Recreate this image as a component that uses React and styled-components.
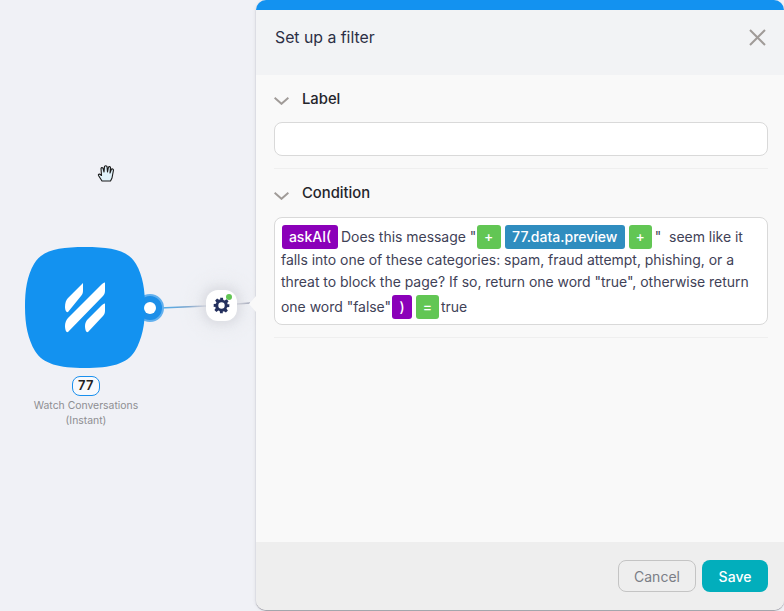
import React from "react";
import styled, { createGlobalStyle } from "styled-components";

const Global = createGlobalStyle`
  html, body { margin: 0; padding: 0; height: 100%; background: #f0f1f6; overflow: hidden; }
  #root { height: 100%; }
  * { box-sizing: border-box; }
`;
const Page = styled.div`
  width: 784px; height: 611px; display: flex; font-family: Inter, "Liberation Sans", sans-serif;
  background: #f0f1f6; overflow: hidden;
`;
const Canvas = styled.div`position: relative; width: 256px; flex: none;`;
const Links = styled.svg`position: absolute; left: 0; top: 0;`;
const Cursor = styled.svg`position: absolute; left: 97px; top: 164px;`;
const Blob = styled.svg`position: absolute; left: 25px; top: 247px;`;
const PortRing = styled.div`
  position: absolute; left: 136px; top: 294px; width: 28px; height: 28px; border-radius: 50%;
  background: #1d8fe8; border: 2px solid #62b0ee;
`;
const PortDot = styled.div`
  position: absolute; left: 144px; top: 302px; width: 12px; height: 12px; border-radius: 50%; background: #fff;
`;
const NodeMeta = styled.div`
  position: absolute; left: 26px; top: 376px; width: 120px; display: flex; flex-direction: column;
  align-items: center;
`;
const Badge = styled.div`
  width: 28px; height: 20px; border: 1.5px solid #1a90ee; border-radius: 8px; background: #f8f9fc;
  font-size: 13px; font-weight: 600; line-height: 17px; text-align: center; color: #222; letter-spacing: .5px;
`;
const NodeName = styled.div`
  margin-top: 2px; font-size: 10.4px; line-height: 15px; color: #8e8e92; text-align: center; white-space: nowrap;
`;
const FilterNode = styled.div`
  position: absolute; left: 206px; top: 290px; width: 31px; height: 31px; border-radius: 12px;
  background: #fff; display: flex; align-items: center; justify-content: center;
  box-shadow: 0 0 7px 4px rgba(214,215,221,.65), 0 0 12px 13px rgba(232,233,238,.55);
`;
const Dot = styled.span`
  position: absolute; right: 5px; top: 4px; width: 6px; height: 6px; border-radius: 50%; background: #62c654;
`;
const Panel = styled.div`
  position: relative; flex: 1; height: 610px; display: flex; flex-direction: column; overflow: visible;
  border-radius: 12px 12px 10px 10px; box-shadow: -1px 0 3px rgba(170,170,180,.25), 0 1px 1px rgba(90,90,100,.55);
  background: #f9f9f9;
  &::before {
    content: ""; position: absolute; left: -7px; top: 296px; width: 0; height: 0;
    border-top: 8.5px solid transparent; border-bottom: 8.5px solid transparent; border-right: 7px solid #f9f9f9;
  }
`;
const TopBar = styled.div`height: 10px; flex: none; background: #1392f0; border-radius: 12px 12px 0 0;`;
const Header = styled.div`
  height: 65px; flex: none; background: #f2f3f5; display: flex; align-items: flex-start;
  justify-content: space-between; padding: 18px 18px 0 19px;
`;
const Title = styled.div`font-size: 15.8px; line-height: 20px; color: #2c2f45;`;
const Body = styled.div`flex: 1; padding: 0 16px 0 18px;`;
const Section = styled.div`
  border-bottom: 1px solid #efefef; padding-bottom: ${p => p.$pb}px;
`;
const SectionHead = styled.div`
  height: ${p => p.$h}px; display: flex; align-items: center; gap: 13px;
`;
const SectionLabel = styled.div`font-size: 14.8px; font-weight: 500; color: #25252b; line-height: 20px;`;
const Field = styled.div`
  width: 494px; height: 34px; background: #fff; border: 1px solid #d9d9d9; border-radius: 8px;
`;
const Editor = styled.div`
  width: 494px; height: 108px; background: #fff; border: 1px solid #d9d9d9; border-radius: 8px;
  padding: 7px 6px 0 6px; font-size: 14px; line-height: 22px; color: #3f4257; letter-spacing: -0.03px;
`;
const Pill = styled.span`
  display: inline-block; height: 24px; line-height: 24px; padding: 0 ${p => p.$px ?? 6}px;
  margin: ${p => p.$mt ?? 0}px ${p => p.$mr ?? 4}px 0 ${p => p.$ml ?? 0}px;
  border-radius: 3px; color: #fff; font-weight: 500; font-size: 14px; letter-spacing: 0;
  background: ${p => p.$bg}; vertical-align: baseline; min-width: ${p => p.$min ?? 0}px; text-align: center;
`;
const FirstLine = styled.span`margin-left: 1px;`;
const Footer = styled.div`
  height: 68px; flex: none; background: #eeeeee; display: flex; align-items: flex-start; justify-content: flex-end;
  gap: 6px; padding: 18px 16px 0 0; border-radius: 0 0 10px 10px;
`;
const Button = styled.button`
  height: 32px; border-radius: 8px; font: ${p => p.$primary ? 500 : 400} 14px Inter, "Liberation Sans", sans-serif;
  width: ${p => p.$primary ? 66 : 78}px; padding: 0;
  background: ${p => p.$primary ? "#02aebc" : "transparent"};
  color: ${p => p.$primary ? "#fff" : "#7b7e86"};
  border: ${p => p.$primary ? "none" : "1px solid #c4c4c4"};
`;

const Chevron = () => (
  <svg width="15" height="8" viewBox="0 0 15 8" fill="none" style={{ marginTop: 5 }}>
    <path d="M.6.8 7.5 6.8 14.4.8" stroke="#a09b98" strokeWidth="2" />
  </svg>
);
const PLUS = "#62c654", PURPLE = "#8b00b9", BLUE = "#2f8dbf";

export default function App() {
  return (
    <Page>
      <Global />
      <Canvas>
        <Links width="256" height="611">
          <defs>
            <linearGradient id="lnk" gradientUnits="userSpaceOnUse" x1="160" y1="308" x2="206" y2="306">
              <stop offset="0" stopColor="#4fb0ee" />
              <stop offset="1" stopColor="#8f9ab8" />
            </linearGradient>
          </defs>
          <path d="M160 308 L206 306" stroke="url(#lnk)" strokeWidth="1.5" fill="none" />
          <path d="M237 304 L250 303" stroke="#8f93a8" strokeWidth="1.5" fill="none" />
        </Links>
        <Cursor width="20" height="20" viewBox="0 0 20 20">
          <path d="M5 17 L1.5 11.5 Q1 10 2.5 10 L4.5 11.5 L4 4.5 Q4.5 3 6 4 L7 8 L7.5 2.5 Q8.5 1 10 2.5 L10.5 8 L11.5 3 Q13 2 13.5 3.5 L13 9 L14.5 5 Q16 4.5 16.5 6 L15 14 L13.5 17 Z" fill="#e0f2fb" stroke="#1a1a1a" strokeWidth="1.1" strokeLinejoin="round" />
        </Cursor>
        <PortRing />
        <Blob width="120" height="121" viewBox="0 0 120 121">
          <path d="M60 0C86 0 103 3 111 17C118 29 120 43 120 60C120 78 117 92 110 104C102 117 86 121 60 121C34 121 18 117 10 104C3 92 0 78 0 60C0 43 2 29 9 17C17 3 34 0 60 0Z" fill="#1392f0" />
          <path d="M58 36V44C58 46 57 48 56 49L43 65C41 66 40 62 40 60C40 56 41 53 43 51Z" fill="#fff" />
          <path d="M80 36V44C80 46 79 48 78 49L43 85C41 86 40 82 40 79C40 76 41 73 43 71L76 38C78 36 80 35 80 36Z" fill="#fff" />
          <path d="M80 57V64C80 66 79 68 78 69L63 85C61 86 60 82 60 79C60 76 61 74 63 72L76 59C78 57 80 56 80 57Z" fill="#fff" />
        </Blob>
        <PortDot />
        <NodeMeta>
          <Badge>77</Badge>
          <NodeName>Watch Conversations<br />(Instant)</NodeName>
        </NodeMeta>
        <FilterNode>
          <svg width="17" height="17" viewBox="0 0 24 24">
            <path fillRule="evenodd" fill="#24305e" d="M10 1h4l.6 3.2 1.9.8 2.7-1.9 2.8 2.8-1.9 2.7.8 1.9L23 10v4l-3.1.6-.8 1.9 1.9 2.7-2.8 2.8-2.7-1.9-1.9.8L14 23h-4l-.6-3.1-1.9-.8-2.7 1.9-2.8-2.8 1.9-2.7-.8-1.9L1 14v-4l3.1-.5.8-1.9L3 4.9 5.8 2.1l2.7 1.9 1.9-.8L10 1Zm2 6.5a4.5 4.5 0 1 0 0 9 4.5 4.5 0 0 0 0-9Z" />
          </svg>
          <Dot />
        </FilterNode>
      </Canvas>
      <Panel>
        <TopBar />
        <Header>
          <Title>Set up a filter</Title>
          <svg width="17" height="17" viewBox="0 0 17 17" style={{ marginTop: 1 }}>
            <path d="M1 1 16 16M16 1 1 16" stroke="#a09b98" strokeWidth="2" fill="none" />
          </svg>
        </Header>
        <Body>
          <Section $pb={12}>
            <SectionHead $h={47}>
              <Chevron />
              <SectionLabel>Label</SectionLabel>
            </SectionHead>
            <Field />
          </Section>
          <Section $pb={12}>
            <SectionHead $h={48}>
              <Chevron />
              <SectionLabel>Condition</SectionLabel>
            </SectionHead>
            <Editor>
              <FirstLine>
                <Pill $bg={PURPLE} $mr={3} $min={56}>askAI(</Pill>
                Does this message "
                <Pill $bg={PLUS} $min={24} $ml={0.5}>+</Pill>
                <Pill $bg={BLUE} $min={120}>77.data.preview</Pill>
                <Pill $bg={PLUS} $min={23} $mr={3}>+</Pill>
                "&nbsp; seem like it
              </FirstLine>
              <br />
              falls into one of these categories: spam, fraud attempt, phishing, or a<br />
              threat to block the page? If so, return one word "true", otherwise return<br />
              one word "false"
              <Pill $bg={PURPLE} $min={20} $ml={1} $mt={2}>)</Pill>
              <Pill $bg={PLUS} $min={23} $mr={2} $mt={2}>=</Pill>
              true
            </Editor>
          </Section>
        </Body>
        <Footer>
          <Button>Cancel</Button>
          <Button $primary>Save</Button>
        </Footer>
      </Panel>
    </Page>
  );
}
